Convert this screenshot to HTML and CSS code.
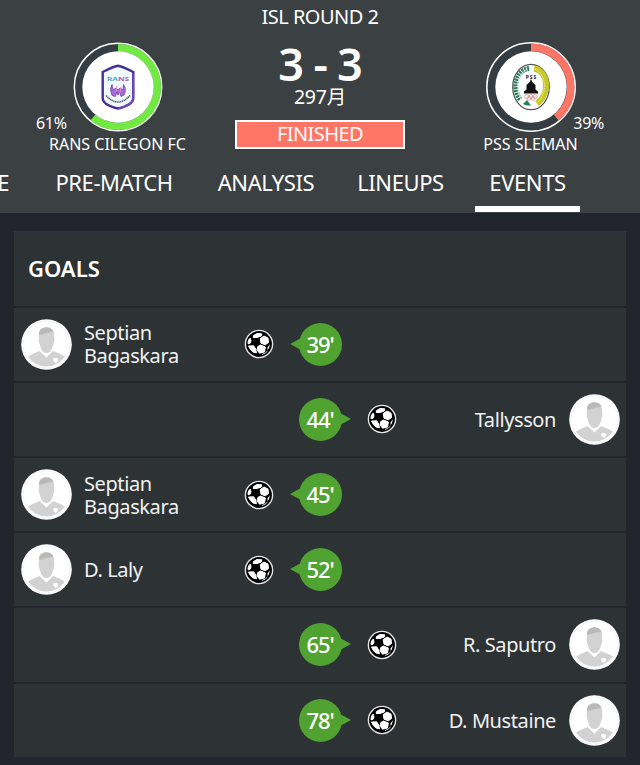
FILE: index.html
```html
<!DOCTYPE html>
<html lang="en">
<head>
    <meta charset="UTF-8">
    <title>Rans Cilegon FC - PSS Sleman</title>
    <link rel="stylesheet" href="styles.css">
</head>
<body>

<svg class="symbols">
    <symbol id="player" viewBox="0 0 51 51">
        <circle cx="25.5" cy="25.5" r="25.3" fill="#fff"/>
        <circle cx="25.5" cy="25.5" r="23.5" fill="none" stroke="#f3f3f3" stroke-width="1"/>
        <path d="M7 37.500Q12 34.500 18.500 32L25.500 38.500L32 32Q39 34.500 44 37.500Q36.500 47.500 25.500 47.500Q14 47.500 7 37.500Z" fill="#d2d2d2"/>
        <path d="M18 14Q18.500 9 25.500 8.500Q32.500 9 32.700 14L33.300 20Q33.500 24 32.300 25.500Q31.500 30 28.700 33Q25.500 35 22.300 33Q19.500 30 18.700 25.500Q17.500 24 17.700 20Z" fill="#d2d2d2"/>
        <path d="M18 16Q17.600 9.500 24 8.300Q32.500 7 32.900 16.500L32 13Q28 12.800 24 14.500Q21 15.800 18 16Z" fill="#b9b9b9"/>
        <path d="M32 39.500Q34.500 39.300 34.500 38.700Q35 39.500 37 39.500Q37.500 42.500 34.500 44Q32 42.500 32 39.500Z" fill="#fff"/>
    </symbol>
    <symbol id="ball" viewBox="0 0 30 30">
        <circle cx="15" cy="15" r="13.600" fill="#000" stroke="#e5e5e5" stroke-width="1.400"/>
        <g fill="#fff" stroke="#fff" stroke-width="1" stroke-linejoin="round">
            <path d="M9.500 6.500L13 4.500L17.800 4.800L17.300 7L13 8.500L9.200 8.600Z"/>
            <path d="M16.200 9.600L20 7L24 9L24.600 13.500L21.300 15.800L17 14.200Z"/>
            <path d="M13.800 17.500L16.500 16L21.400 18L20.500 23L15.500 24.200L13 20.700Z"/>
            <path d="M4.500 17L9.700 16.800L11.700 20L12.500 23.800L9 23Q6 21 4.500 17Z"/>
            <path d="M4 13.200Q4.400 10.500 6.300 9L7 12L6 14.400L4.100 14.800Z"/>
        </g>
        <path d="M23.500 18.500L26 15Q25.500 19 23.600 21.200Z" fill="#fff"/>
        <path d="M18 25.500Q21.500 24.500 23.500 22" fill="none" stroke="#ddd" stroke-width="1"/>
    </symbol>
</svg>

<header class="match">
    <div class="team home">
        <svg class="ring" viewBox="0 0 90 90">
            <circle cx="45" cy="45" r="43.700" fill="#363d42" stroke="#fff" stroke-width="1.500"/>
            <circle class="share" cx="45" cy="45" r="39.300" pathLength="100" stroke="#72e842" stroke-dasharray="61 39"/>
            <circle cx="45" cy="45" r="35.700" fill="#fff"/>
            <path d="M45 23.800Q50 24.800 60.300 30V56Q60.300 63 45 66.500Q29.700 63 29.700 56V30Q40 24.800 45 23.800Z" fill="#f1fafc" stroke="#44309a" stroke-width="2.400"/>
            <path d="M60.300 32V56Q60.300 63 45 66.500" fill="none" stroke="#7943bd" stroke-width="1.600"/>
            <text class="rans" x="45" y="38.700" textLength="22" lengthAdjust="spacingAndGlyphs"><tspan fill="#43aec9">RA</tspan><tspan fill="#a764b9">NS</tspan></text>
            <path d="M39 42.500Q36 47 39 53.500L42.500 54.500L43.800 50L45 53L46.500 50L48 54.500L51 53Q54 47 50.500 42.500L50 48L47 46L45 48L43 46L40 48Z" fill="#a66bd8" stroke="#7440bd" stroke-width=".8"/>
            <path d="M44 44L43 50M48 45L47 51" stroke="#e487d2" stroke-width="1"/>
            <path d="M33 53.500Q45 66.500 57 53.500" fill="none" stroke="#51505e" stroke-width="1.600" stroke-dasharray="1.200 .6"/>
        </svg>
        <span class="percent">61%</span>
        <div class="team-name">RANS CILEGON FC</div>
    </div>

    <div class="summary">
        <div class="round">ISL ROUND 2</div>
        <div class="score">3 - 3</div>
        <div class="date">297月</div>
        <div class="status">FINISHED</div>
    </div>

    <div class="team away">
        <svg class="ring" viewBox="0 0 90 90">
            <circle cx="45" cy="45" r="44.200" fill="#363d42" stroke="#fff" stroke-width="1.500"/>
            <circle class="share" cx="45" cy="45" r="39.700" pathLength="100" stroke="#ff7566" stroke-dasharray="39 61"/>
            <circle cx="45" cy="45" r="35.700" fill="#fff"/>
            <ellipse cx="45" cy="45" rx="18.300" ry="22.700" fill="#fff" stroke="#53565a" stroke-width="1.200"/>
            <path d="M43 26.500C29 28 26 48 34.500 58" fill="none" stroke="#277b59" stroke-width="5" stroke-dasharray="2 .8"/>
            <path d="M41.500 27C31 32 28.500 48 36.500 60" fill="none" stroke="#fff" stroke-width=".8"/>
            <path d="M48 26.500C62 29 65 51 51 61.500" fill="none" stroke="#c6c729" stroke-width="6"/>
            <path d="M49 27C60 31 62.500 51 51 61" fill="none" stroke="#f0ef9b" stroke-width="1" stroke-dasharray="1.500 1"/>
            <path d="M37 62L41 58L45 63.500Q40 64 37 62Z" fill="#248055"/>
            <path d="M45 37L46.300 40L49.500 43V47.500L52 49.500V51.500H38V49.500L40.500 47.500V43L43.700 40Z" fill="#111"/>
            <text class="pss" x="45.500" y="36.500">PSS</text>
            <g fill="none" stroke="#e09798" stroke-width=".9">
                <circle cx="40.800" cy="54.500" r="2"/>
                <circle cx="45" cy="54.500" r="2"/>
                <circle cx="49.200" cy="54.500" r="2"/>
                <circle cx="43" cy="56.300" r="2"/>
                <circle cx="47" cy="56.300" r="2"/>
            </g>
        </svg>
        <span class="percent">39%</span>
        <div class="team-name">PSS SLEMAN</div>
    </div>
</header>

<nav class="tabs">
    <a class="cut">E</a>
    <a>PRE-MATCH</a>
    <a>ANALYSIS</a>
    <a>LINEUPS</a>
    <a class="active">EVENTS</a>
</nav>

<main class="card">
    <h2>GOALS</h2>
    <div class="goal">
        <svg class="avatar"><use href="#player"/></svg>
        <span class="name">Septian<br>Bagaskara</span>
        <svg class="ball"><use href="#ball"/></svg>
        <span class="minute">39'</span>
    </div>
    <div class="goal away-goal">
        <svg class="avatar"><use href="#player"/></svg>
        <span class="name">Tallysson</span>
        <svg class="ball"><use href="#ball"/></svg>
        <span class="minute">44'</span>
    </div>
    <div class="goal">
        <svg class="avatar"><use href="#player"/></svg>
        <span class="name">Septian<br>Bagaskara</span>
        <svg class="ball"><use href="#ball"/></svg>
        <span class="minute">45'</span>
    </div>
    <div class="goal">
        <svg class="avatar"><use href="#player"/></svg>
        <span class="name">D. Laly</span>
        <svg class="ball"><use href="#ball"/></svg>
        <span class="minute">52'</span>
    </div>
    <div class="goal away-goal">
        <svg class="avatar"><use href="#player"/></svg>
        <span class="name">R. Saputro</span>
        <svg class="ball"><use href="#ball"/></svg>
        <span class="minute">65'</span>
    </div>
    <div class="goal away-goal">
        <svg class="avatar"><use href="#player"/></svg>
        <span class="name">D. Mustaine</span>
        <svg class="ball"><use href="#ball"/></svg>
        <span class="minute">78'</span>
    </div>
</main>

</body>
</html>
```

FILE: styles.css
```css
* { box-sizing: border-box; }
body {
    margin: 0;
    height: 765px;
    overflow: hidden;
    background: #22252e;
    color: #fff;
    font-family: "Noto Sans", "Noto Sans CJK JP", sans-serif;
}
.symbols { display: none; }

.match {
    display: grid;
    grid-template-columns: 235px 170px 235px;
    height: 160px;
    background: #3b4043;
}
.team {
    position: relative;
    display: flex;
    flex-direction: column;
    align-items: center;
    padding-top: 42px;
}
.ring { width: 90px; height: 90px; flex: none; }
.share {
    fill: none;
    stroke-width: 7.5;
    transform: rotate(-90deg);
    transform-origin: center;
}
.rans { font-size: 6px; font-weight: 700; text-anchor: middle; }
.pss { font-size: 5px; font-weight: 700; text-anchor: middle; fill: #222; letter-spacing: 1px; }
.percent {
    position: absolute;
    top: 113px;
    font-size: 16px;
    line-height: 20px;
    letter-spacing: -0.3px;
}
.home .percent { left: 36px; }
.away .percent { right: 36px; }
.team-name {
    font-size: 16px;
    line-height: 20px;
    margin-top: 2px;
    white-space: nowrap;
}
.away .team-name, .away .ring { margin-left: 16px; }
.summary { text-align: center; white-space: nowrap; }
.round {
    height: 41px;
    padding-top: 5px;
    font-size: 20px;
    line-height: 24px;
    letter-spacing: -0.5px;
}
.score {
    height: 44px;
    font-size: 45px;
    font-weight: 600;
    line-height: 45px;
    letter-spacing: -1.2px;
}
.date { font-size: 19.5px; line-height: 24px; height: 35px; letter-spacing: -0.2px; }
.status {
    height: 29px;
    border: 2px solid #fff;
    background: #ff7566;
    font-size: 20px;
    line-height: 24px;
    letter-spacing: -0.6px;
}

.tabs {
    display: grid;
    grid-template-columns: 22px 144px 120px 109px 105px;
    gap: 20px;
    height: 53px;
    background: #3b4043;
}
.tabs a {
    height: 52px;
    padding-top: 7px;
    font-size: 22px;
    line-height: 30px;
    letter-spacing: -0.4px;
    text-align: center;
    white-space: nowrap;
}
.tabs .cut { text-align: right; padding-right: 13px; direction: rtl; }
.tabs .active { border-bottom: 6px solid #fff; }

.card {
    width: 612px;
    margin: 18px auto 0;
    background: #2d3234;
}
.card h2 {
    margin: 0;
    padding-left: 14px;
    height: 74.6px;
    font-size: 22px;
    font-weight: 600;
    line-height: 75px;
}
.goal {
    display: grid;
    grid-template-columns: 51px 172px 30px 25px 43px;
    align-items: center;
    height: 75.2px;
    padding-left: 6.5px;
    border-top: 2px solid #22262a;
}
.away-goal {
    direction: rtl;
    padding: 0 6.5px 0 0;
}
.avatar { width: 51px; height: 51px; }
.name {
    direction: ltr;
    padding-left: 12.5px;
    font-size: 20px;
    line-height: 23px;
    letter-spacing: -0.4px;
    color: #f1f2f2;
}
.away-goal .name { padding: 0 12.5px 0 0; text-align: right; }
.ball { width: 30px; height: 30px; }
.minute {
    grid-column: 5;
    position: relative;
    direction: ltr;
    width: 43px;
    height: 43px;
    border-radius: 50%;
    background: #51a331;
    font-size: 22px;
    font-weight: 500;
    line-height: 43px;
    letter-spacing: -1.1px;
    text-align: center;
}
.minute::before {
    content: "";
    position: absolute;
    left: -9px;
    top: 15px;
    border: 6.5px solid transparent;
    border-left: 0;
    border-right: 11px solid #51a331;
}
.away-goal .minute::before {
    left: auto;
    right: -9px;
    border-right: 0;
    border-left: 11px solid #51a331;
}
```
